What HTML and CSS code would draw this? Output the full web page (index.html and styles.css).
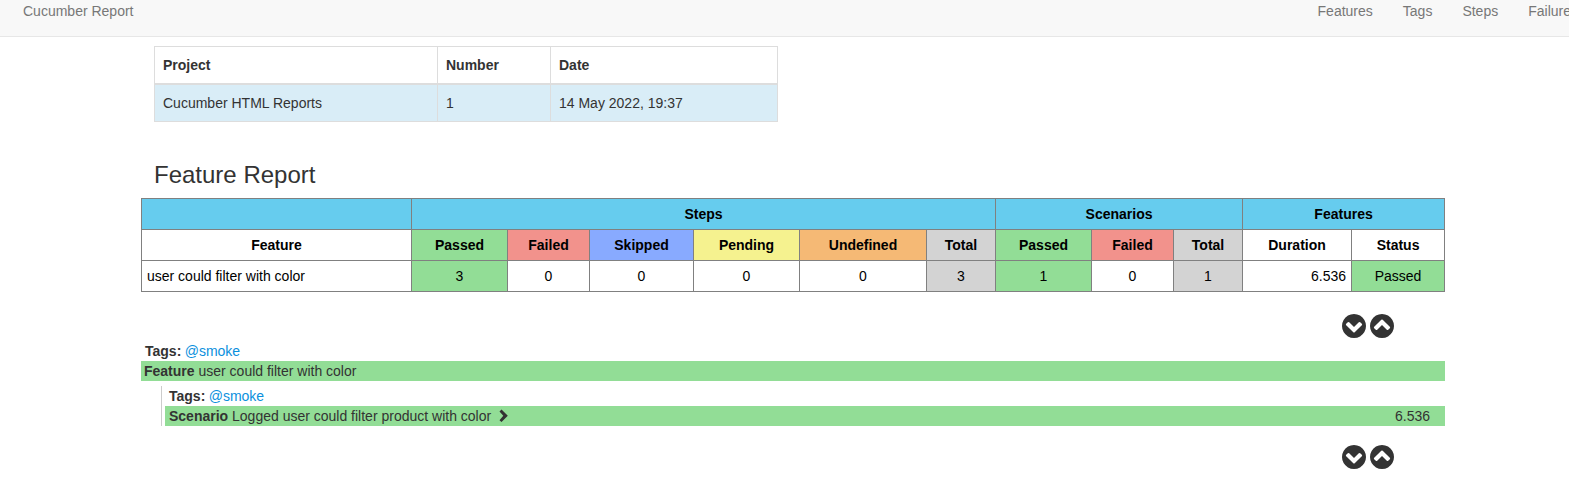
FILE: index.html
```html
<!DOCTYPE html>
<html lang="en">
<head>
<meta charset="utf-8">
<title>Cucumber Report</title>
<link rel="stylesheet" href="styles.css">
</head>
<body>
<svg class="defs" width="0" height="0">
  <symbol id="circle-down" viewBox="128 128 1536 1536"><path d="M941 1299l454-454q19-19 19-45t-19-45l-102-102q-19-19-45-19t-45 19l-307 307-307-307q-19-19-45-19t-45 19l-102 102q-19 19-19 45t19 45l454 454q19 19 45 19t45-19zm723-403q0 209-103 385.500t-279.500 279.500-385.500 103-385.500-103-279.500-279.500-103-385.500 103-385.500 279.500-279.500 385.500-103 385.500 103 279.500 279.500 103 385.500z"/></symbol>
</svg>
<nav class="navbar">
  <a class="brand">Cucumber Report</a>
  <div class="links"><a>Features</a><a>Tags</a><a>Steps</a><a>Failures</a></div>
</nav>
<main class="page">
  <table class="info">
    <colgroup><col class="w-project"><col class="w-number"><col class="w-date"></colgroup>
    <thead><tr><th>Project</th><th>Number</th><th>Date</th></tr></thead>
    <tbody><tr><td>Cucumber HTML Reports</td><td>1</td><td>14 May 2022, 19:37</td></tr></tbody>
  </table>
  <h2 class="title">Feature Report</h2>
  <table class="stats">
    <colgroup><col class="c-feature"><col class="c-passed"><col class="c-failed"><col class="c-skipped"><col class="c-pending"><col class="c-undefined"><col class="c-total"><col class="c-passed"><col class="c-failed"><col class="c-total"><col class="c-duration"><col class="c-status"></colgroup>
    <thead>
      <tr class="group"><th></th><th colspan="6">Steps</th><th colspan="3">Scenarios</th><th colspan="2">Features</th></tr>
      <tr><th>Feature</th><th class="passed">Passed</th><th class="failed">Failed</th><th class="skipped">Skipped</th><th class="pending">Pending</th><th class="undefined">Undefined</th><th class="total">Total</th><th class="passed">Passed</th><th class="failed">Failed</th><th class="total">Total</th><th>Duration</th><th>Status</th></tr>
    </thead>
    <tbody>
      <tr><td class="name">user could filter with color</td><td class="passed">3</td><td>0</td><td>0</td><td>0</td><td>0</td><td class="total">3</td><td class="passed">1</td><td>0</td><td class="total">1</td><td class="duration">6.536</td><td class="passed">Passed</td></tr>
    </tbody>
  </table>
  <div class="toggles"><svg><use href="#circle-down"/></svg><svg class="up"><use href="#circle-down"/></svg></div>
  <section class="feature">
    <div class="tags"><b>Tags:</b> <a>@smoke</a></div>
    <div class="bar"><b>Feature</b> user could filter with color</div>
    <div class="element">
      <div class="tags"><b>Tags:</b> <a>@smoke</a></div>
      <div class="bar scenario"><span><b>Scenario</b> Logged user could filter product with color</span><svg class="chevron" viewBox="0 0 10 14"><path d="M0.500 2.400L2.500 0.500L8.800 6.800L2.500 13.100L0.500 11.200L4.300 6.800Z"/></svg><span class="time">6.536</span></div>
    </div>
  </section>
  <div class="toggles bottom"><svg><use href="#circle-down"/></svg><svg class="up"><use href="#circle-down"/></svg></div>
</main>
</body>
</html>
```
FILE: styles.css
```css
* { box-sizing: border-box; }
html, body { overflow: hidden; }
body { margin: 0; height: 484px; background: #fff; color: #333; font: 14px/20px "Liberation Sans", Arial, sans-serif; }
.defs { display: none; }
.navbar { display: flex; justify-content: space-between; height: 37px; padding: 1px 0 0 23px; background: #f8f8f8; border-bottom: 1px solid #e7e7e7; color: #777; }
.links { display: flex; gap: 30px; margin-right: -9px; }
.page { width: 1304px; margin: 9px 0 0 141px; }
table { table-layout: fixed; border-collapse: collapse; }
.info { width: 624px; margin-left: 13px; }
.w-project { width: 283px; }
.w-number { width: 113px; }
.w-date { width: 227px; }
.info th, .info td { height: 37px; padding: 8px; border: 1px solid #ddd; text-align: left; line-height: 20px; }
.info th { border-bottom-width: 2px; }
.info td { background: #d9edf7; }
.title { margin: 40px 0 10px 13px; font-size: 24px; line-height: 26px; font-weight: 400; }
.stats { width: 1304px; color: #000; }
.stats th, .stats td { height: 31px; padding: 5px; border: 1px solid gray; text-align: center; line-height: 20px; }
.c-feature { width: 270px; }
.c-passed { width: 96px; }
.c-failed { width: 82px; }
.c-skipped { width: 104px; }
.c-pending { width: 106px; }
.c-undefined { width: 127px; }
.c-total { width: 69px; }
.c-duration { width: 109px; }
.c-status { width: 93px; }
.group { background: #66ccee; }
.stats .name { text-align: left; }
.stats .duration { text-align: right; }
.passed, .bar { background: #92dd96; }
.failed { background: #f2928c; }
.skipped { background: #88aaff; }
.pending { background: #f5f28f; }
.undefined { background: #f5b975; }
.total { background: lightgray; }
.toggles { display: flex; gap: 4px; height: 24px; margin: 22px 0 3px; padding-left: 1200.500px; }
.toggles svg { width: 24px; height: 24px; fill: #333; }
.toggles .up { transform: rotate(180deg); }
.feature { width: 1304px; }
.tags { height: 20px; padding-left: 4px; }
.tags a { margin-left: -0.500px; color: #0a90dd; }
.bar { height: 20px; padding-left: 3px; }
.element { margin: 5px 0 0 20px; padding-left: 3px; border-left: 1px solid #ccc; }
.scenario { display: flex; align-items: center; padding: 0 15px 0 4px; }
.chevron { width: 10px; height: 14px; margin-left: 8px; fill: #333; }
.time { margin-left: auto; }
.bottom { margin-top: 19px; }
```
